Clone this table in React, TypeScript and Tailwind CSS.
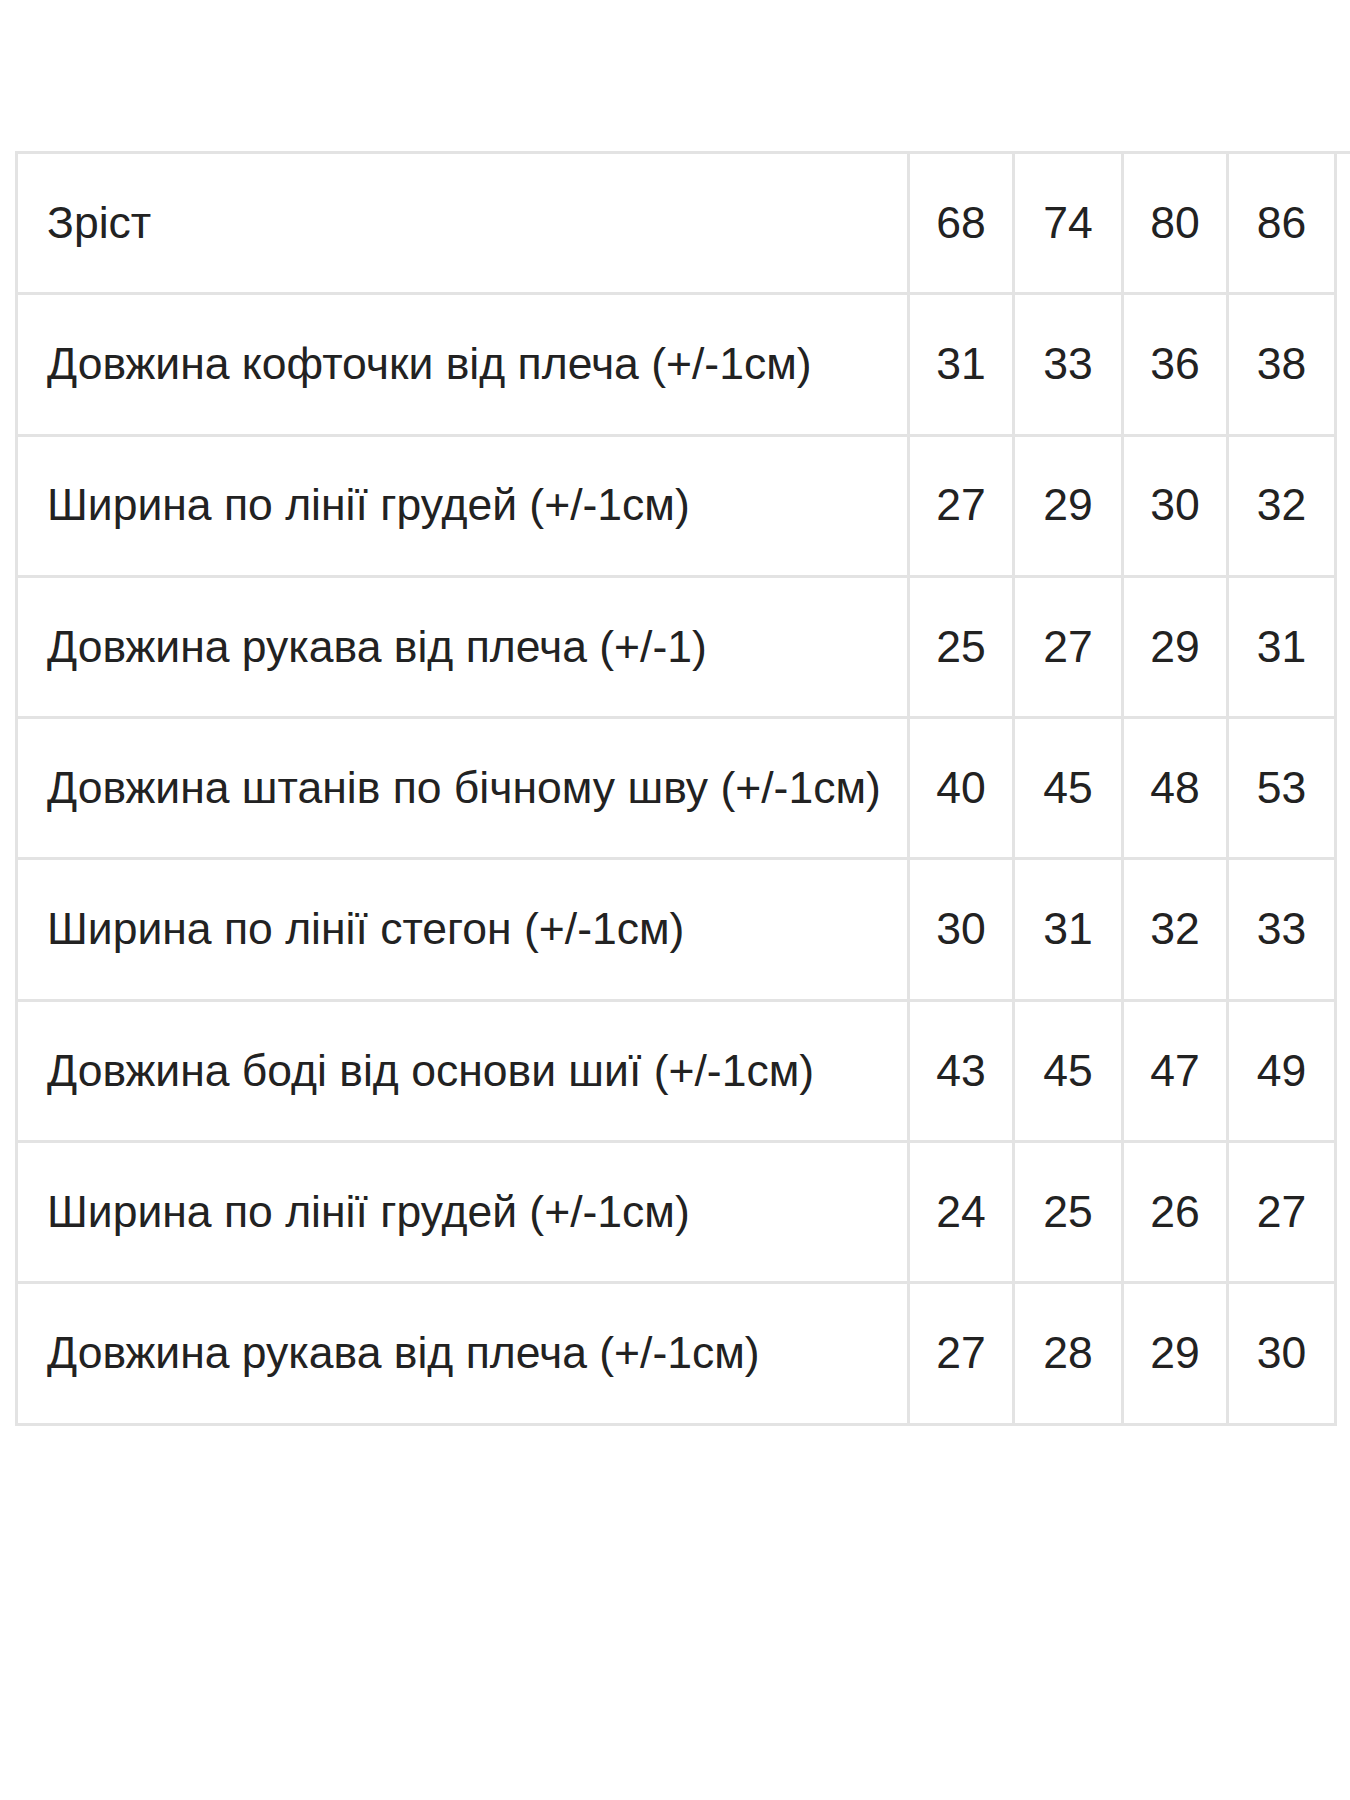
const rows: [string, string[]][] = [
  ["Зріст", ["68", "74", "80", "86"]],
  ["Довжина кофточки від плеча (+/-1см)", ["31", "33", "36", "38"]],
  ["Ширина по лінії грудей (+/-1см)", ["27", "29", "30", "32"]],
  ["Довжина рукава від плеча (+/-1)", ["25", "27", "29", "31"]],
  ["Довжина штанів по бічному шву (+/-1см)", ["40", "45", "48", "53"]],
  ["Ширина по лінії стегон (+/-1см)", ["30", "31", "32", "33"]],
  ["Довжина боді від основи шиї (+/-1см)", ["43", "45", "47", "49"]],
  ["Ширина по лінії грудей (+/-1см)", ["24", "25", "26", "27"]],
  ["Довжина рукава від плеча (+/-1см)", ["27", "28", "29", "30"]],
];

export default function App() {
  return (
    <div
      className="min-h-[1800px] w-[1350px] bg-white pt-[151px] pl-[15px] text-[#222222]"
      style={{ fontFamily: '"Liberation Sans", Arial, sans-serif' }}
    >
      <div className="border-t-[3px] border-[#e3e3e3]">
        <table className="-mt-[3px] w-[1319px] table-fixed border-collapse text-[44.5px] leading-none">
          <colgroup>
            <col className="w-[892px]" />
            <col className="w-[105px]" />
            <col className="w-[109px]" />
            <col className="w-[105px]" />
            <col className="w-[108px]" />
          </colgroup>
          <tbody>
            {rows.map(([label, values], i) => (
              <tr key={i} className="h-[141.3px]">
                <td className="border-[3px] border-[#e3e3e3] pl-[29px] align-middle whitespace-nowrap">{label}</td>
                {values.map((v, j) => (
                  <td key={j} className="border-[3px] border-[#e3e3e3] text-center align-middle">
                    {v}
                  </td>
                ))}
              </tr>
            ))}
          </tbody>
        </table>
      </div>
    </div>
  );
}
